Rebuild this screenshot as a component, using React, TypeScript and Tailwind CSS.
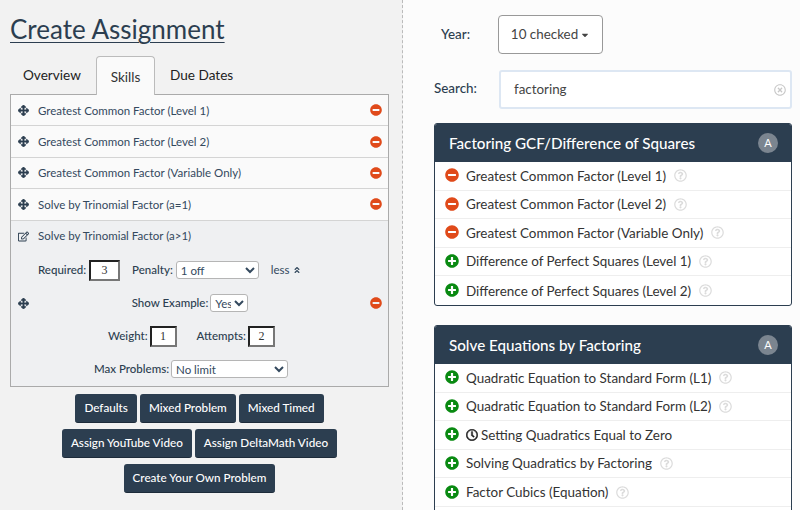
import { FaArrowsAlt, FaMinusCircle, FaPlusCircle, FaRegEdit, FaRegQuestionCircle, FaAngleDoubleUp, FaRegClock, FaCaretDown, FaRegTimesCircle } from "react-icons/fa";

const skills = [
  "Greatest Common Factor (Level 1)",
  "Greatest Common Factor (Level 2)",
  "Greatest Common Factor (Variable Only)",
  "Solve by Trinomial Factor (a=1)",
];

const factoring = [
  { name: "Greatest Common Factor (Level 1)", added: true },
  { name: "Greatest Common Factor (Level 2)", added: true },
  { name: "Greatest Common Factor (Variable Only)", added: true },
  { name: "Difference of Perfect Squares (Level 1)", added: false },
  { name: "Difference of Perfect Squares (Level 2)", added: false },
];

const equations = [
  { name: "Quadratic Equation to Standard Form (L1)", help: true },
  { name: "Quadratic Equation to Standard Form (L2)", help: true },
  { name: "Setting Quadratics Equal to Zero", timed: true },
  { name: "Solving Quadratics by Factoring", help: true },
  { name: "Factor Cubics (Equation)", help: true },
];

function NumBox({ value, w }: { value: string; w: string }) {
  return (
    <input
      readOnly
      value={value}
      className={`${w} h-[21px] bg-white border-2 border-t-[#222] border-l-[#222] border-r-[#777] border-b-[#777] text-center text-[12px] font-normal text-[#333] outline-none [font-family:'Liberation_Serif',serif]`}
    />
  );
}

function Btn({ children }: { children: string }) {
  return (
    <button className="h-[29px] px-[9px] rounded-[3px] bg-[#2c3e50] text-white text-[11.7px] font-medium leading-none border-b border-[#1d2b3a]">
      {children}
    </button>
  );
}

function Panel({ title, children }: { title: string; children: React.ReactNode }) {
  return (
    <div className="rounded-[3px] border border-[#2c3e50] bg-white overflow-hidden">
      <div className="h-[38px] bg-[#2c3e50] flex items-center justify-between pl-[14px] pr-[13px]">
        <span className="text-white text-[15.2px] font-medium">{title}</span>
        <span className="w-5 h-5 rounded-full bg-[#7b8590] text-white text-[11px] flex items-center justify-center">A</span>
      </div>
      {children}
    </div>
  );
}

function Row({ last, children }: { last?: boolean; children: React.ReactNode }) {
  return (
    <div className={`h-[28.6px] flex items-center pl-[10px] text-[13.45px] text-[#333] ${last ? "" : "border-b border-[#eeeeee]"}`}>
      {children}
    </div>
  );
}

function Help() {
  return <FaRegQuestionCircle className="ml-[8px] text-[#dcdcdc] text-[13px]" />;
}

function MoveIcon() {
  return <FaArrowsAlt stroke="currentColor" strokeWidth={30} className="text-[#2c3e50] text-[11px] w-[11px]" />;
}

export default function App() {
  return (
    <div className="w-[800px] h-[510px] overflow-hidden flex bg-[#fcfcfc] font-['Lato','Noto_Sans',sans-serif]">
      {/* Left column */}
      <div className="w-[403px] h-full shrink-0 bg-[#f2f2f2] border-r border-dashed border-[#bbbbbb] pl-[10px] pr-[13px] pt-[11px]">
        <h1 className="text-[26px] leading-[36px] text-[#2c3e50] underline underline-offset-[3px] decoration-1">Create Assignment</h1>

        <div className="flex mt-[9px] h-[38px] text-[13.6px] text-[#222]">
          <div className="w-[86px] pl-[13px] pt-[9px]">Overview</div>
          <div className="relative z-10 w-[59px] h-[39px] text-center pt-[10px] bg-[#fafafa] border border-b-0 border-[#bbbbbb] rounded-t-[4px] text-[#333]">Skills</div>
          <div className="pl-[15px] pt-[9px]">Due Dates</div>
        </div>

        <div className="border border-[#aaaaaa] text-[11.5px] text-[#34495e]">
          {skills.map((s) => (
            <div key={s} className="h-[31.4px] flex items-center pl-[7px] pr-[6px] bg-[#fafafa] border-b border-[#d4d4d4]">
              <MoveIcon />
              <span className="ml-[9px] flex-1">{s}</span>
              <FaMinusCircle className="text-[#e04a1a] text-[12px]" />
            </div>
          ))}
          <div className="h-[165px] bg-[#eff0f2] pl-[7px] pr-[6px] flex flex-col">
            <div className="h-[31px] flex items-center">
              <FaRegEdit className="text-[#2c3e50] text-[11px] w-[11px]" />
              <span className="ml-[9px]">Solve by Trinomial Factor (a&gt;1)</span>
            </div>
            <div className="flex items-center h-[21px] mt-[8px] pl-[20px] font-medium text-[#2c3e50]">
              <span>Required:</span>
              <span className="ml-[3px]"><NumBox value="3" w="w-[31px]" /></span>
              <span className="ml-[12px]">Penalty:</span>
              <select className="ml-[3px] w-[83px] h-[18px] bg-white border border-[#b5b5b5] rounded-[3px] font-normal text-[11.5px] text-[#34495e]">
                <option>1 off</option>
              </select>
              <span className="ml-[12px] font-normal flex items-center text-[#34495e]">
                less <FaAngleDoubleUp className="ml-[3px] text-[8px]" />
              </span>
            </div>
            <div className="flex items-center h-[19px] mt-[13px]">
              <MoveIcon />
              <div className="flex-1 flex justify-center items-center font-medium pr-[19px] text-[#2c3e50]">
                <span>Show Example:</span>
                <select className="ml-[2px] w-[38px] h-[18px] pl-0 bg-white border border-[#b5b5b5] rounded-[3px] font-normal text-[11.5px] text-[#34495e]">
                  <option>Yes</option>
                </select>
              </div>
              <FaMinusCircle className="text-[#e04a1a] text-[12px]" />
            </div>
            <div className="flex justify-center items-center h-[21px] mt-[13px] font-medium pr-[17px] text-[#2c3e50]">
              <span>Weight:</span>
              <span className="ml-[2px]"><NumBox value="1" w="w-[27px]" /></span>
              <span className="ml-[20px]">Attempts:</span>
              <span className="ml-[2px]"><NumBox value="2" w="w-[27px]" /></span>
            </div>
            <div className="flex justify-center items-center h-[19px] mt-[13px] font-medium pr-[18px] text-[#2c3e50]">
              <span>Max Problems:</span>
              <select className="ml-[2px] w-[117px] h-[18px] bg-white border border-[#b5b5b5] rounded-[3px] font-normal text-[11.5px] text-[#34495e]">
                <option>No limit</option>
              </select>
            </div>
          </div>
        </div>

        <div className="flex flex-col items-center gap-[6px] mt-[7px]">
          <div className="flex gap-[3px]">
            <Btn>Defaults</Btn>
            <Btn>Mixed Problem</Btn>
            <Btn>Mixed Timed</Btn>
          </div>
          <div className="flex gap-[3px]">
            <Btn>Assign YouTube Video</Btn>
            <Btn>Assign DeltaMath Video</Btn>
          </div>
          <Btn>Create Your Own Problem</Btn>
        </div>
      </div>

      {/* Right column */}
      <div className="flex-1 pl-[31px] pr-[8px] pt-[15px]">
        <div className="flex items-center h-[39px]">
          <span className="w-[64px] pl-[7px] text-[13.4px] font-medium text-[#2c3e50]">Year:</span>
          <button className="w-[105px] h-[39px] bg-white border border-[#999999] rounded-[4px] flex items-center justify-center text-[13.4px] text-[#444]">
            10 checked <FaCaretDown className="ml-[2px] text-[10px]" />
          </button>
        </div>
        <div className="flex items-center h-[39px] mt-[16px]">
          <span className="w-[65px] text-[13.4px] font-medium text-[#2c3e50] -mt-[3px]">Search:</span>
          <div className="flex-1 h-[39px] bg-white border-2 border-[#dde7f3] rounded-[3px] flex items-center justify-between pl-[13px] pr-[4px]">
            <span className="text-[13.4px] text-[#444]">factoring</span>
            <FaRegTimesCircle className="text-[#c8c8c8] text-[12px]" />
          </div>
        </div>

        <div className="mt-[14px]">
          <Panel title="Factoring GCF/Difference of Squares">
            {factoring.map((f, i) => (
              <Row key={f.name} last={i === factoring.length - 1}>
                {f.added ? (
                  <FaMinusCircle className="text-[#e04a1a] text-[14px] -mt-[1px]" />
                ) : (
                  <FaPlusCircle className="text-[#0a8a12] text-[14px] -mt-[1px]" />
                )}
                <span className="ml-[7px]">{f.name}</span>
                <Help />
              </Row>
            ))}
          </Panel>
        </div>

        <div className="mt-[19px]">
          <Panel title="Solve Equations by Factoring">
            {equations.map((e) => (
              <Row key={e.name}>
                <FaPlusCircle className="text-[#0a8a12] text-[14px] -mt-[1px]" />
                {e.timed && <FaRegClock stroke="currentColor" strokeWidth={20} className="ml-[7px] text-[#222] text-[12px]" />}
                <span className={e.timed ? "ml-[3px]" : "ml-[7px]"}>{e.name}</span>
                {e.help && <Help />}
              </Row>
            ))}
            {/* list runs on below the fold */}
            <div className="h-[28px]" />
          </Panel>
        </div>
      </div>
    </div>
  );
}
